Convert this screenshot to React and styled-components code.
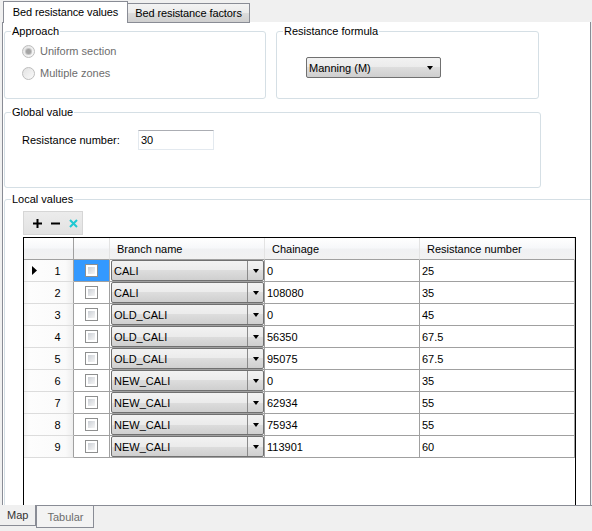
import React from 'react';
import styled, { createGlobalStyle } from 'styled-components';

const GlobalStyle = createGlobalStyle`
    html, body {
        margin: 0;
        padding: 0;
        background: #f0f0f0;
    }
    body {
        font-family: "Liberation Sans", Arial, sans-serif;
        font-size: 11px;
        color: #000;
    }
    * {
        box-sizing: border-box;
    }
`;

const rows = [
    { id: 1, branch: 'CALI', chainage: '0', resistance: '25' },
    { id: 2, branch: 'CALI', chainage: '108080', resistance: '35' },
    { id: 3, branch: 'OLD_CALI', chainage: '0', resistance: '45' },
    { id: 4, branch: 'OLD_CALI', chainage: '56350', resistance: '67.5' },
    { id: 5, branch: 'OLD_CALI', chainage: '95075', resistance: '67.5' },
    { id: 6, branch: 'NEW_CALI', chainage: '0', resistance: '35' },
    { id: 7, branch: 'NEW_CALI', chainage: '62934', resistance: '55' },
    { id: 8, branch: 'NEW_CALI', chainage: '75934', resistance: '55' },
    { id: 9, branch: 'NEW_CALI', chainage: '113901', resistance: '60' },
];

function App() {
    return (
        <Window>
            <GlobalStyle />
            <TabStrip>
                <Tab active width={125}>Bed resistance values</Tab>
                <Tab width={123}>Bed resistance factors</Tab>
                <TabFill />
            </TabStrip>

            <TabPage>
                <TopRow>
                    <Group width={262} height={74}>
                        <Legend>Approach</Legend>
                        <RadioList>
                            <RadioRow>
                                <Radio checked />
                                <DisabledText>Uniform section</DisabledText>
                            </RadioRow>
                            <RadioRow>
                                <Radio />
                                <DisabledText>Multiple zones</DisabledText>
                            </RadioRow>
                        </RadioList>
                    </Group>

                    <Group width={263} height={74}>
                        <Legend>Resistance formula</Legend>
                        <FormulaBody>
                            <Combo width={135} height={21}>
                                <ComboText>Manning (M)</ComboText>
                                <Arrow />
                            </Combo>
                        </FormulaBody>
                    </Group>
                </TopRow>

                <Group width={537} height={82} top={7}>
                    <Legend>Global value</Legend>
                    <FieldRow>
                        <FieldLabel>Resistance number:</FieldLabel>
                        <TextBox>30</TextBox>
                    </FieldRow>
                </Group>

                <Group width={640} height={340} top={5}>
                    <Legend>Local values</Legend>
                    <LocalBody>
                        <Toolbar>
                            <ToolButton>
                                <svg width="9" height="9" viewBox="0 0 9 9">
                                    <path d="M0 4.5H9M4.5 0V9" stroke="#000" strokeWidth="2" />
                                </svg>
                            </ToolButton>
                            <ToolButton>
                                <svg width="9" height="9" viewBox="0 0 9 9">
                                    <path d="M0 4.5H9" stroke="#000" strokeWidth="2" />
                                </svg>
                            </ToolButton>
                            <ToolButton>
                                <svg width="9" height="9" viewBox="0 0 9 9">
                                    <path d="M1 1L8 8M8 1L1 8" stroke="#1ec8d2" strokeWidth="2" />
                                </svg>
                            </ToolButton>
                        </Toolbar>

                        <Grid>
                            <HeadCell corner />
                            <HeadCell />
                            <HeadCell>Branch name</HeadCell>
                            <HeadCell>Chainage</HeadCell>
                            <HeadCell>Resistance number</HeadCell>

                            {rows.map((row, i) => (
                                <React.Fragment key={row.id}>
                                    <RowHeader>
                                        <Indicator>
                                            {i === 0 && (
                                                <svg width="5" height="9" viewBox="0 0 5 9">
                                                    <path d="M0 0L5 4.5L0 9Z" fill="#000" />
                                                </svg>
                                            )}
                                        </Indicator>
                                        <RowNumber>{row.id}</RowNumber>
                                    </RowHeader>
                                    <CheckCell selected={i === 0}>
                                        <CheckBox />
                                    </CheckCell>
                                    <ComboCell>
                                        <Combo>
                                            <ComboText>{row.branch}</ComboText>
                                            <DropButton>
                                                <Arrow />
                                            </DropButton>
                                        </Combo>
                                    </ComboCell>
                                    <Cell>{row.chainage}</Cell>
                                    <Cell>{row.resistance}</Cell>
                                </React.Fragment>
                            ))}
                        </Grid>
                    </LocalBody>
                </Group>
            </TabPage>

            <BottomStrip>
                <BottomTab active>Map</BottomTab>
                <BottomTab>Tabular</BottomTab>
                <BottomFill />
            </BottomStrip>
        </Window>
    );
}

const Window = styled.div`
    width: 592px;
    height: 531px;
    display: flex;
    flex-direction: column;
    overflow: hidden;
    background: #f0f0f0;
`;

const TabStrip = styled.div`
    display: flex;
    align-items: flex-end;
    height: 23px;
    padding-left: 3px;
    padding-top: 1px;
`;

const Tab = styled.div`
    width: ${(p) => p.width}px;
    height: ${(p) => (p.active ? '22px' : '20px')};
    display: flex;
    align-items: center;
    justify-content: center;
    border: 1px solid #898c95;
    border-bottom: ${(p) => (p.active ? 'none' : '1px solid #898c95')};
    margin-left: ${(p) => (p.active ? '0' : '-1px')};
    background: ${(p) => (p.active ? '#fff' : 'linear-gradient(#f3f3f3, #ebebeb 50%, #dddddd 50%, #cfcfcf)')};
    position: relative;
    z-index: ${(p) => (p.active ? 1 : 0)};
    white-space: nowrap;
    letter-spacing: -0.1px;
    padding-bottom: ${(p) => (p.active ? '2px' : '0')};
`;

const TabFill = styled.div`
    flex: 1;
    height: 1px;
    margin-right: 1px;
    background: #898c95;
`;

const TabPage = styled.div`
    flex: 1;
    width: 589px;
    margin-left: 2px;
    margin-top: -1px;
    background: #fff;
    border-left: 1px solid #898c95;
    border-right: 1px solid #898c95;
    padding: 3px 0 0 1px;
    overflow: hidden;
    min-height: 0;
`;

const TopRow = styled.div`
    display: flex;
    gap: 10px;
`;

const Group = styled.fieldset`
    margin: ${(p) => p.top || 0}px 0 0 0;
    padding: 0;
    min-width: 0;
    width: ${(p) => p.width}px;
    height: ${(p) => p.height}px;
    border: 1px solid #d5dfe5;
    border-radius: 3px;
`;

const Legend = styled.legend`
    margin-left: 6px;
    padding: 0 1px 0 1px;
    line-height: 13px;
    color: #000;
`;

const RadioList = styled.div`
    display: flex;
    flex-direction: column;
    gap: 6px;
    padding: 5px 0 0 17px;
`;

const RadioRow = styled.div`
    display: flex;
    align-items: center;
    height: 16px;
    gap: 5px;
`;

const Radio = styled.span`
    width: 13px;
    height: 13px;
    border-radius: 50%;
    border: 1px solid #bdbdbd;
    background: linear-gradient(135deg, #e2e2e2, #fafafa);
    display: flex;
    align-items: center;
    justify-content: center;

    &::after {
        content: '';
        display: ${(p) => (p.checked ? 'block' : 'none')};
        width: 5px;
        height: 5px;
        border-radius: 50%;
        background: #a4a4a4;
        box-shadow: 0 0 0 1px #c4c4c4;
    }
`;

const DisabledText = styled.span`
    color: #6d6d6d;
`;

const FormulaBody = styled.div`
    padding: 19px 0 0 29px;
`;

const Combo = styled.div`
    width: ${(p) => (p.width ? `${p.width}px` : '100%')};
    height: ${(p) => (p.height ? `${p.height}px` : '100%')};
    border: 1px solid #707070;
    border-radius: 2px;
    background: linear-gradient(#f2f2f2, #ebebeb 50%, #dddddd 50%, #cfcfcf);
    display: flex;
    align-items: center;
    padding-left: 2px;
    padding-right: ${(p) => (p.width ? '7px' : '0')};
`;

const ComboText = styled.span`
    flex: 1;
    white-space: nowrap;
`;

const Arrow = styled.span`
    width: 0;
    height: 0;
    border-left: 3.5px solid transparent;
    border-right: 3.5px solid transparent;
    border-top: 4px solid #000;
`;

const DropButton = styled.span`
    width: 16px;
    height: 100%;
    border-left: 1px solid #8a8a8a;
    display: flex;
    align-items: center;
    justify-content: center;
`;

const FieldRow = styled.div`
    display: flex;
    align-items: center;
    padding: 11px 0 0 17px;
`;

const FieldLabel = styled.span`
    width: 116px;
`;

const TextBox = styled.div`
    width: 76px;
    height: 20px;
    border: 1px solid #e3e9ef;
    border-top-color: #abadb3;
    display: flex;
    align-items: center;
    padding-left: 2px;
`;

const LocalBody = styled.div`
    padding: 5px 0 0 18px;
`;

const Toolbar = styled.div`
    width: 60px;
    height: 24px;
    display: flex;
    align-items: center;
    padding-left: 4px;
    background: linear-gradient(#ececec, #e2e2e2);
    border: 1px solid #d6d6d6;
`;

const ToolButton = styled.span`
    width: 18px;
    height: 18px;
    display: flex;
    align-items: center;
    justify-content: center;
`;

const Grid = styled.div`
    margin-top: 2px;
    width: 553px;
    height: 320px;
    border: 1px solid #000;
    display: grid;
    grid-template-columns: 50px 36px 155px 155px 155px;
    grid-auto-rows: 22px;
    align-content: start;
    background: #fff;
`;

const HeadCell = styled.div`
    display: flex;
    align-items: center;
    padding-left: 7px;
    border-right: 1px solid ${(p) => (p.corner ? '#a0a0a0' : '#e3e3e3')};
    border-bottom: 1px solid #a0a0a0;
    background: linear-gradient(#ffffff, #f7f8fa 45%, #f0f1f3 55%, #f2f2f2);
    white-space: nowrap;
`;

const RowHeader = styled.div`
    display: flex;
    align-items: center;
    border-right: 1px solid #a0a0a0;
    border-bottom: 1px solid #dcdcdc;
    background: linear-gradient(90deg, #f3f3f3, #fdfdfd 10%, #fafafa 85%, #eeeeee);
`;

const Indicator = styled.span`
    width: 20px;
    display: flex;
    justify-content: center;
    padding-left: 1px;
`;

const RowNumber = styled.span`
    flex: 1;
    text-align: center;
    padding-right: 2px;
`;

const CheckCell = styled.div`
    display: flex;
    align-items: center;
    justify-content: center;
    border-right: 1px solid #a0a0a0;
    border-bottom: 1px solid #a0a0a0;
    background: ${(p) => (p.selected ? '#3399ff' : '#fff')};
`;

const CheckBox = styled.span`
    width: 13px;
    height: 13px;
    border: 1px solid #8e8f8f;
    background: #fff;
    padding: 2px;
    display: block;

    &::after {
        content: '';
        display: block;
        width: 100%;
        height: 100%;
        background: linear-gradient(135deg, #cbcfd5, #f6f6f6);
    }
`;

const ComboCell = styled.div`
    border-right: 1px solid #a0a0a0;
    border-bottom: 1px solid #a0a0a0;
    padding-left: 1px;
`;

const Cell = styled.div`
    display: flex;
    align-items: center;
    padding-left: 2px;
    border-right: 1px solid #a0a0a0;
    border-bottom: 1px solid #a0a0a0;
    white-space: nowrap;
`;

const BottomStrip = styled.div`
    display: flex;
    height: 26px;
    align-items: flex-start;
`;

const BottomTab = styled.div`
    height: ${(p) => (p.active ? '21px' : '23px')};
    padding: 0 ${(p) => (p.active ? '7px' : '10px')};
    display: flex;
    align-items: center;
    border: 1px solid #898c95;
    border-top: ${(p) => (p.active ? 'none' : '1px solid #898c95')};
    border-left: ${(p) => (p.active ? 'none' : '1px solid #898c95')};
    padding-top: ${(p) => (p.active ? '0' : '1px')};
    color: ${(p) => (p.active ? '#333' : '#6d6d6d')};
    background: ${(p) => (p.active ? '#f0f0f0' : '#f3f3f3')};
`;

const BottomFill = styled.div`
    flex: 1;
    height: 1px;
    background: #898c95;
`;

export default App;
